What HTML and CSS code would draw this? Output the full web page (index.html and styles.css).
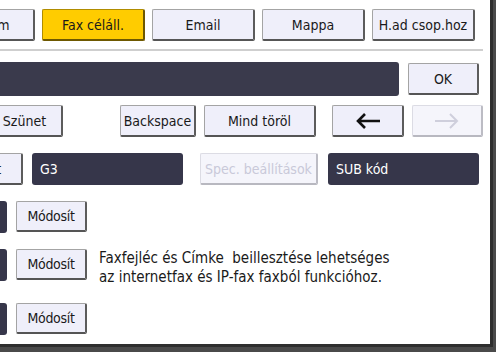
FILE: index.html
```html
<!DOCTYPE html>
<html lang="hu">
<head>
    <meta charset="UTF-8">
    <title>Fax célállomás</title>
    <link rel="stylesheet" href="styles.css">
</head>
<body>
    <div class="screen">
        <div class="tabs">
            <div class="btn tab">Program</div>
            <div class="btn tab active">Fax céláll.</div>
            <div class="btn tab">Email</div>
            <div class="btn tab">Mappa</div>
            <div class="btn tab">H.ad csop.hoz</div>
        </div>
        <div class="divider"></div>

        <div class="row entry-row">
            <div class="entry"></div>
            <div class="btn ok">OK</div>
        </div>

        <div class="row keys">
            <div class="btn pause">Szünet</div>
            <div class="btn backspace">Backspace</div>
            <div class="btn clear">Mind töröl</div>
            <div class="btn arrow">
                <svg width="26" height="16" viewBox="0 0 26 16"><path d="M25 8H3M10 1L3 8l7 7" fill="none" stroke="#111" stroke-width="2.6"/></svg>
            </div>
            <div class="btn arrow disabled">
                <svg width="26" height="16" viewBox="0 0 26 16"><path d="M1 8h22M16 1l7 7-7 7" fill="none" stroke="#cfcfdc" stroke-width="2"/></svg>
            </div>
        </div>

        <div class="row fields">
            <div class="btn cut">Részlet</div>
            <div class="field g3">G3</div>
            <div class="btn spec disabled">Spec. beállítások</div>
            <div class="field sub">SUB kód</div>
        </div>

        <div class="row item">
            <div class="field sliver"></div>
            <div class="btn edit">Módosít</div>
        </div>
        <div class="row item">
            <div class="field sliver"></div>
            <div class="btn edit">Módosít</div>
            <p class="note">Faxfejléc és Címke&nbsp; beillesztése lehetséges<br>az internetfax és IP-fax faxból funkcióhoz.</p>
        </div>
        <div class="row item">
            <div class="field sliver"></div>
            <div class="btn edit">Módosít</div>
        </div>
    </div>
</body>
</html>
```

FILE: styles.css
```css
* {
    box-sizing: border-box;
}
html, body {
    margin: 0;
    padding: 0;
}
body {
    width: 496px;
    height: 352px;
    overflow: hidden;
    background-color: #4a4a4a;
    font-family: "DejaVu Sans Condensed", "Liberation Sans", sans-serif;
    font-size: 14px;
    color: #1a1a1a;
}
.screen {
    width: 493px;
    height: 347px;
    padding-top: 9px;
    background-color: #ffffff;
    border-right: 3px solid #2e2e2e;
    border-bottom: 3px solid #2e2e2e;
    overflow: hidden;
}
.row {
    display: flex;
    align-items: flex-start;
}
.btn {
    display: flex;
    align-items: center;
    justify-content: center;
    flex: none;
    height: 32px;
    white-space: nowrap;
    overflow: hidden;
    background-color: #efeffa;
    border-style: solid;
    border-width: 1px 2px 2px 1px;
    border-color: #a4a4a4 #5c5c5c #555555 #a4a4a4;
    border-radius: 2px;
}
.btn.disabled {
    color: #c9c9d9;
    background-color: #f5f5fb;
    border-color: #dcdce4 #bcbcc4 #b8b8c0 #dcdce4;
}
.field {
    flex: none;
    height: 32px;
    background-color: #36364a;
    border-radius: 3px;
    color: #ffffff;
    display: flex;
    align-items: center;
    padding-left: 8px;
}

.tabs {
    display: flex;
    gap: 7px;
    margin-left: -68px;
}
.tab {
    width: 103px;
}
.tab.active {
    background-color: #ffcc00;
    border-color: #b08c00 #6e5800 #6e5800 #b08c00;
}
.divider {
    width: 483px;
    height: 2px;
    margin-top: 8px;
    background-color: #cfcfcf;
}

.entry-row {
    margin-top: 11px;
}
.entry {
    width: 399px;
    height: 34px;
    background-color: #3a3a4c;
    border-radius: 0 3px 3px 0;
}
.ok {
    width: 71px;
    margin: 1px 0 0 9px;
}

.keys {
    margin-top: 9px;
    margin-left: -13px;
}
.pause {
    width: 76px;
}
.backspace {
    width: 76px;
    margin-left: 57px;
}
.clear {
    width: 112px;
    margin-left: 8px;
}
.arrow {
    width: 72px;
    margin-left: 16px;
}
.arrow + .arrow {
    width: 71px;
    margin-left: 8px;
}

.fields {
    margin-top: 16px;
    margin-left: -47px;
}
.cut {
    width: 70px;
    padding-right: 18px;
}
.g3 {
    width: 151px;
    margin-left: 9px;
}
.spec {
    width: 118px;
    margin-left: 17px;
}
.sub {
    width: 151px;
    margin-left: 10px;
}

.item {
    margin-top: 16px;
    margin-left: -40px;
}
.sliver {
    width: 47px;
}
.edit {
    width: 71px;
    height: 31px;
    margin-left: 9px;
    letter-spacing: -0.3px;
}
.note {
    margin: 0 0 0 12px;
    font-size: 15px;
    line-height: 19px;
    color: #1a1a1a;
}
```
